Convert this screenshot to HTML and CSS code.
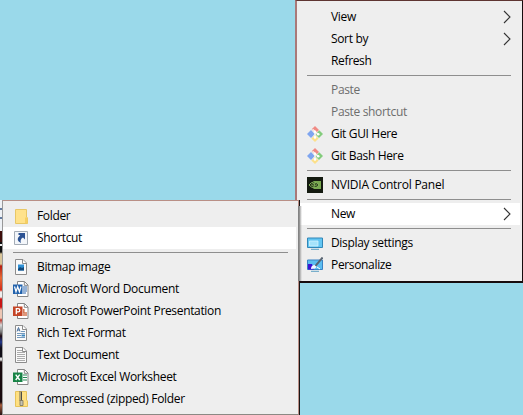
FILE: index.html
```
<!DOCTYPE html>
<html lang="en">
<head>
<meta charset="utf-8">
<title>Desktop menu</title>
<link rel="stylesheet" href="styles.css">
</head>
<body>
<svg width="0" height="0" class="defs" aria-hidden="true">
  <defs>
    <symbol id="git" viewBox="0 0 16 16">
      <path d="M8 0l4 4-3.300 3.300L4.700 3.300z" fill="#f08a84"/>
      <path d="M12.200 4.200L16 8l-4 4-3.500-3.600z" fill="#83cc7c"/>
      <path d="M8 9l3.600 3.500L8 16l-3.700-3.600z" fill="#fce08a"/>
      <path d="M4 4l3.700 4L4 12 0 8z" fill="#7fa5ef"/>
      <path d="M5.600 3.200l5.400 5M8 6v6" stroke="#f4f1ee" stroke-width="1.200"/>
      <circle cx="8" cy="5.800" r="1.300" fill="#fff"/><circle cx="11.200" cy="8.300" r="1.300" fill="#fff"/><circle cx="8" cy="11.400" r="1.300" fill="#fff"/>
    </symbol>
    <symbol id="page" viewBox="0 0 16 16">
      <path d="M2.500.5h7.500l3.500 3.500v11.500h-11z" fill="#fafafa" stroke="#8c8c8c"/>
      <path d="M9.500.8v3.700h3.700" fill="#fff" stroke="#8c8c8c"/>
    </symbol>
    <symbol id="office" viewBox="0 0 16 16">
      <path d="M4.500.5h7l3.500 3.500v11.500H4.500z" fill="#fff" stroke="#858585"/>
      <path d="M11.300.8v3.500h3.500" fill="none" stroke="#858585"/>
    </symbol>
    <symbol id="arrow" viewBox="0 0 8 14"><path d="M1 1l6 6-6 6" fill="none" stroke="#333" stroke-width="1.100"/></symbol>
  </defs>
</svg>

<main class="desktop">
  <nav class="menu menu-main">
    <div class="item"><span class="icon"></span><span class="label">View</span><svg class="arrow"><use href="#arrow"/></svg></div>
    <div class="item"><span class="icon"></span><span class="label">Sort by</span><svg class="arrow"><use href="#arrow"/></svg></div>
    <div class="item"><span class="icon"></span><span class="label">Refresh</span></div>
    <hr>
    <div class="item disabled"><span class="icon"></span><span class="label">Paste</span></div>
    <div class="item disabled"><span class="icon"></span><span class="label">Paste shortcut</span></div>
    <div class="item"><svg class="icon"><use href="#git"/></svg><span class="label">Git GUI Here</span></div>
    <div class="item"><svg class="icon"><use href="#git"/></svg><span class="label">Git Bash Here</span></div>
    <hr>
    <div class="item">
      <svg class="icon" viewBox="0 0 16 16"><path d="M0 0h16v16H0z" fill="#141a10"/><path d="M6.500 4H14v8H6.500z" fill="#78a850"/><path d="M2 8q4.500-6 10 0-5 5.500-10 0z" fill="#17200f" stroke="#83b65a"/><path d="M4.300 8q2.700-3.200 5.500 0-2.800 3-5.500 0z" fill="#17200f" stroke="#83b65a" stroke-width=".9"/><circle cx="7.300" cy="8" r=".9" fill="#83b65a"/></svg>
      <span class="label wide">NVIDIA Control Panel</span>
    </div>
    <hr>
    <div class="item active"><span class="icon"></span><span class="label">New</span><svg class="arrow"><use href="#arrow"/></svg></div>
    <hr>
    <div class="item">
      <svg class="icon" viewBox="0 0 16 16"><path d="M.5 3h15v9.500H.5z" fill="#62c5f2" stroke="#3187b8"/><path d="M2.500 6H11v5H2.500z" fill="#a5e3fb" stroke="#d0f3ff" stroke-width=".8"/><path d="M4 14.300h8" stroke="#5c9fc2"/></svg>
      <span class="label">Display settings</span>
    </div>
    <div class="item">
      <svg class="icon" viewBox="0 0 16 16"><path d="M.5 3h15v9.500H.5z" fill="#5bbdf0" stroke="#3a83c4"/><path d="M1 7h4l2 5.500H1z" fill="#3d12d3"/><path d="M4 12q0-4 4-4l1.500 1.500Q9 12 4 12z" fill="#f4f7ff"/><path d="M8.500 8.800L15.600.5" stroke="#5a6572" stroke-width="2"/><path d="M10 10l3 2" stroke="#fff"/><path d="M4 14.300h8" stroke="#5c9fc2"/></svg>
      <span class="label">Personalize</span>
    </div>
  </nav>

  <nav class="menu menu-sub">
    <div class="item">
      <svg class="icon" viewBox="0 0 16 16"><path d="M2.500 1.500h11V9l1 1v5.500h-12z" fill="#ffe28b" stroke="#e8c766"/><path d="M12 9.500h2.500v5.700H12z" fill="#f6cf63"/></svg>
      <span class="label">Folder</span>
    </div>
    <div class="item active">
      <svg class="icon" viewBox="0 0 16 16"><path d="M1.500 1.500h13v13h-13z" fill="#f3f6fa" stroke="#a4acb6"/><path d="M5.500 3H12v6.500l-2-2Q6.500 9.500 8 13q-6-2.500-.8-7.900H5.500z" fill="#2c5394"/></svg>
      <span class="label">Shortcut</span>
    </div>
    <hr>
    <div class="item">
      <svg class="icon" viewBox="0 0 16 16"><use href="#page"/><path d="M5 5.500h6v6H5z" fill="#2f91d6"/><path d="M5 10l2-2 2 1 2-1v3.500H5z" fill="#174b7b"/></svg>
      <span class="label">Bitmap image</span>
    </div>
    <div class="item">
      <svg class="icon" viewBox="0 0 16 16"><use href="#office"/><path d="M10 6h4M10 8h4M10 10h4M10 12h3" stroke="#2b65ad"/><path d="M0 3.500h9.500v9.500H0z" fill="#2262ac"/><path d="M1.500 5.500l1.500 5.200 1.700-5 1.700 5L8 5.500" fill="none" stroke="#fff" stroke-width="1.200"/></svg>
      <span class="label word">Microsoft Word Document</span>
    </div>
    <div class="item">
      <svg class="icon" viewBox="0 0 16 16"><use href="#office"/><path d="M10.800 6v4H14M10 12h4" fill="none" stroke="#d57650" stroke-width="1.500"/><path d="M0 3.500h9.500v9.500H0z" fill="#c44426"/><path d="M3.300 11.300V5.600h1.900q1.600 0 1.600 1.600T5.200 8.800H3.300" fill="none" stroke="#fff" stroke-width="1.300"/></svg>
      <span class="label">Microsoft PowerPoint Presentation</span>
    </div>
    <div class="item">
      <svg class="icon" viewBox="0 0 16 16"><use href="#page"/><path d="M4 6.500l1.500-4 1.500 4M4.500 5h2" fill="none" stroke="#496f9c"/><path d="M8 6.500h4M4 8.500h8M4 10.500h4M4 12.500h8" stroke="#7399bd"/><path d="M8.500 9.500H12v2H8.500z" fill="#3b86bf"/></svg>
      <span class="label">Rich Text Format</span>
    </div>
    <div class="item">
      <svg class="icon" viewBox="0 0 16 16"><use href="#page"/><path d="M4 3.500h5M4 5.500h8M4 7.500h8M4 9.500h8M4 11.500h8M4 13.500h8" stroke="#a2a2a2" stroke-width=".9"/></svg>
      <span class="label word">Text Document</span>
    </div>
    <div class="item">
      <svg class="icon" viewBox="0 0 16 16"><use href="#office"/><path d="M10 6h4M10 8.500h4M10 11h4" stroke="#278555" stroke-width="1.200"/><path d="M0 3.500h9.500v9.500H0z" fill="#178346"/><path d="M2.700 5.700l4 5.300M6.700 5.700l-4 5.300" stroke="#fff" stroke-width="1.400"/></svg>
      <span class="label">Microsoft Excel Worksheet</span>
    </div>
    <div class="item">
      <svg class="icon" viewBox="0 0 16 16"><path d="M2.500.5h11V9l1 1v5.500h-12z" fill="#ffe082" stroke="#e6c35b"/><path d="M7.500.5v9" stroke="#6d6a5d" stroke-width="3" stroke-dasharray="1 1"/><path d="M8.500 1v9" stroke="#4c4c48"/><path d="M7 9.500h3v5H7z" fill="#c6c3b1" stroke="#77705a" stroke-width=".8"/></svg>
      <span class="label">Compressed (zipped) Folder</span>
    </div>
  </nav>
  <div class="edge"></div>
</main>
</body>
</html>
```
FILE: styles.css
```
* { box-sizing: border-box; }
body { margin: 0; overflow: hidden; }
.defs { position: absolute; }

.desktop {
  position: relative;
  width: 523px;
  height: 415px;
  overflow: hidden;
  background: #9ad9ea;
  font-family: "Open Sans", "Noto Sans", sans-serif;
  font-size: 12px;
  color: #000;
}

.menu {
  position: absolute;
  background: #eee;
}

.menu-main {
  left: 295px;
  top: 0;
  width: 228px;
  height: 283px;
  padding: 5px 2px 5px 3px;
  border: solid #170c0e;
  border-width: 1px 1px 2px 2px;
  border-left-color: #a97979;
  border-top-color: #5e3431;
}

.menu-sub {
  left: 2px;
  top: 200px;
  width: 297px;
  height: 215px;
  padding: 4px 2px 4px 0;
  border: 1px solid #b98f86;
  border-left-color: #999;
  border-bottom-color: #8b8984;
  box-shadow: 1px 0 0 #191516;
}

/* Shadow cast on the parent menu only */
.menu-sub::after {
  content: "";
  position: absolute;
  left: 100%;
  top: 5px;
  width: 4px;
  height: 75px;
  background: linear-gradient(90deg, #777, #999 35%, #eee0);
}

.item {
  display: flex;
  align-items: center;
  height: 22px;
  padding-left: 10px;
}
.menu-main .item { padding: 0 9px 0 7px; }
.active { background: #fff; }
.disabled { color: #6d6d6d; }

.icon { flex: none; width: 16px; height: 16px; margin-right: 8px; }
.label { flex: 1; line-height: 22px; white-space: nowrap; letter-spacing: -.34px; }
.wide { letter-spacing: -.24px; }
.word { letter-spacing: -.27px; }
.arrow { width: 8px; height: 14px; }

hr {
  height: 1px;
  margin: 3px 8px 3px 10px;
  border: 0;
  background: #8e8e8e;
}
.menu-main hr { margin: 3px 9px 3px 7px; }

.edge {
  position: absolute;
  left: 0;
  top: 200px;
  width: 2px;
  height: 215px;
  background: linear-gradient(#eef1f5 0 8px, #637ba0 8px 10px, #eef1f5 10px 17px, #637ba0 17px 19px, #eef1f5 19px 31px, #3d0e0b 31px 42px, #111 42px 44px, #eee 44px 46px, #111 46px 52px, #d9c59a 54px 64px, #b51e12 66px, #e66a35 78px, #d42a18 90px, #eee 92px 97px, #c81515 99px 107px, #edc7b5 110px 118px, #bb3b31 120px, #d8d8d8 125px, #777 132px, #210d14 136px, #23398c 142px, #100d16 148px 157px, #ddd 158px 160px, #18090d 162px 202px, #a55c3c 205px, #231315);
}
```
